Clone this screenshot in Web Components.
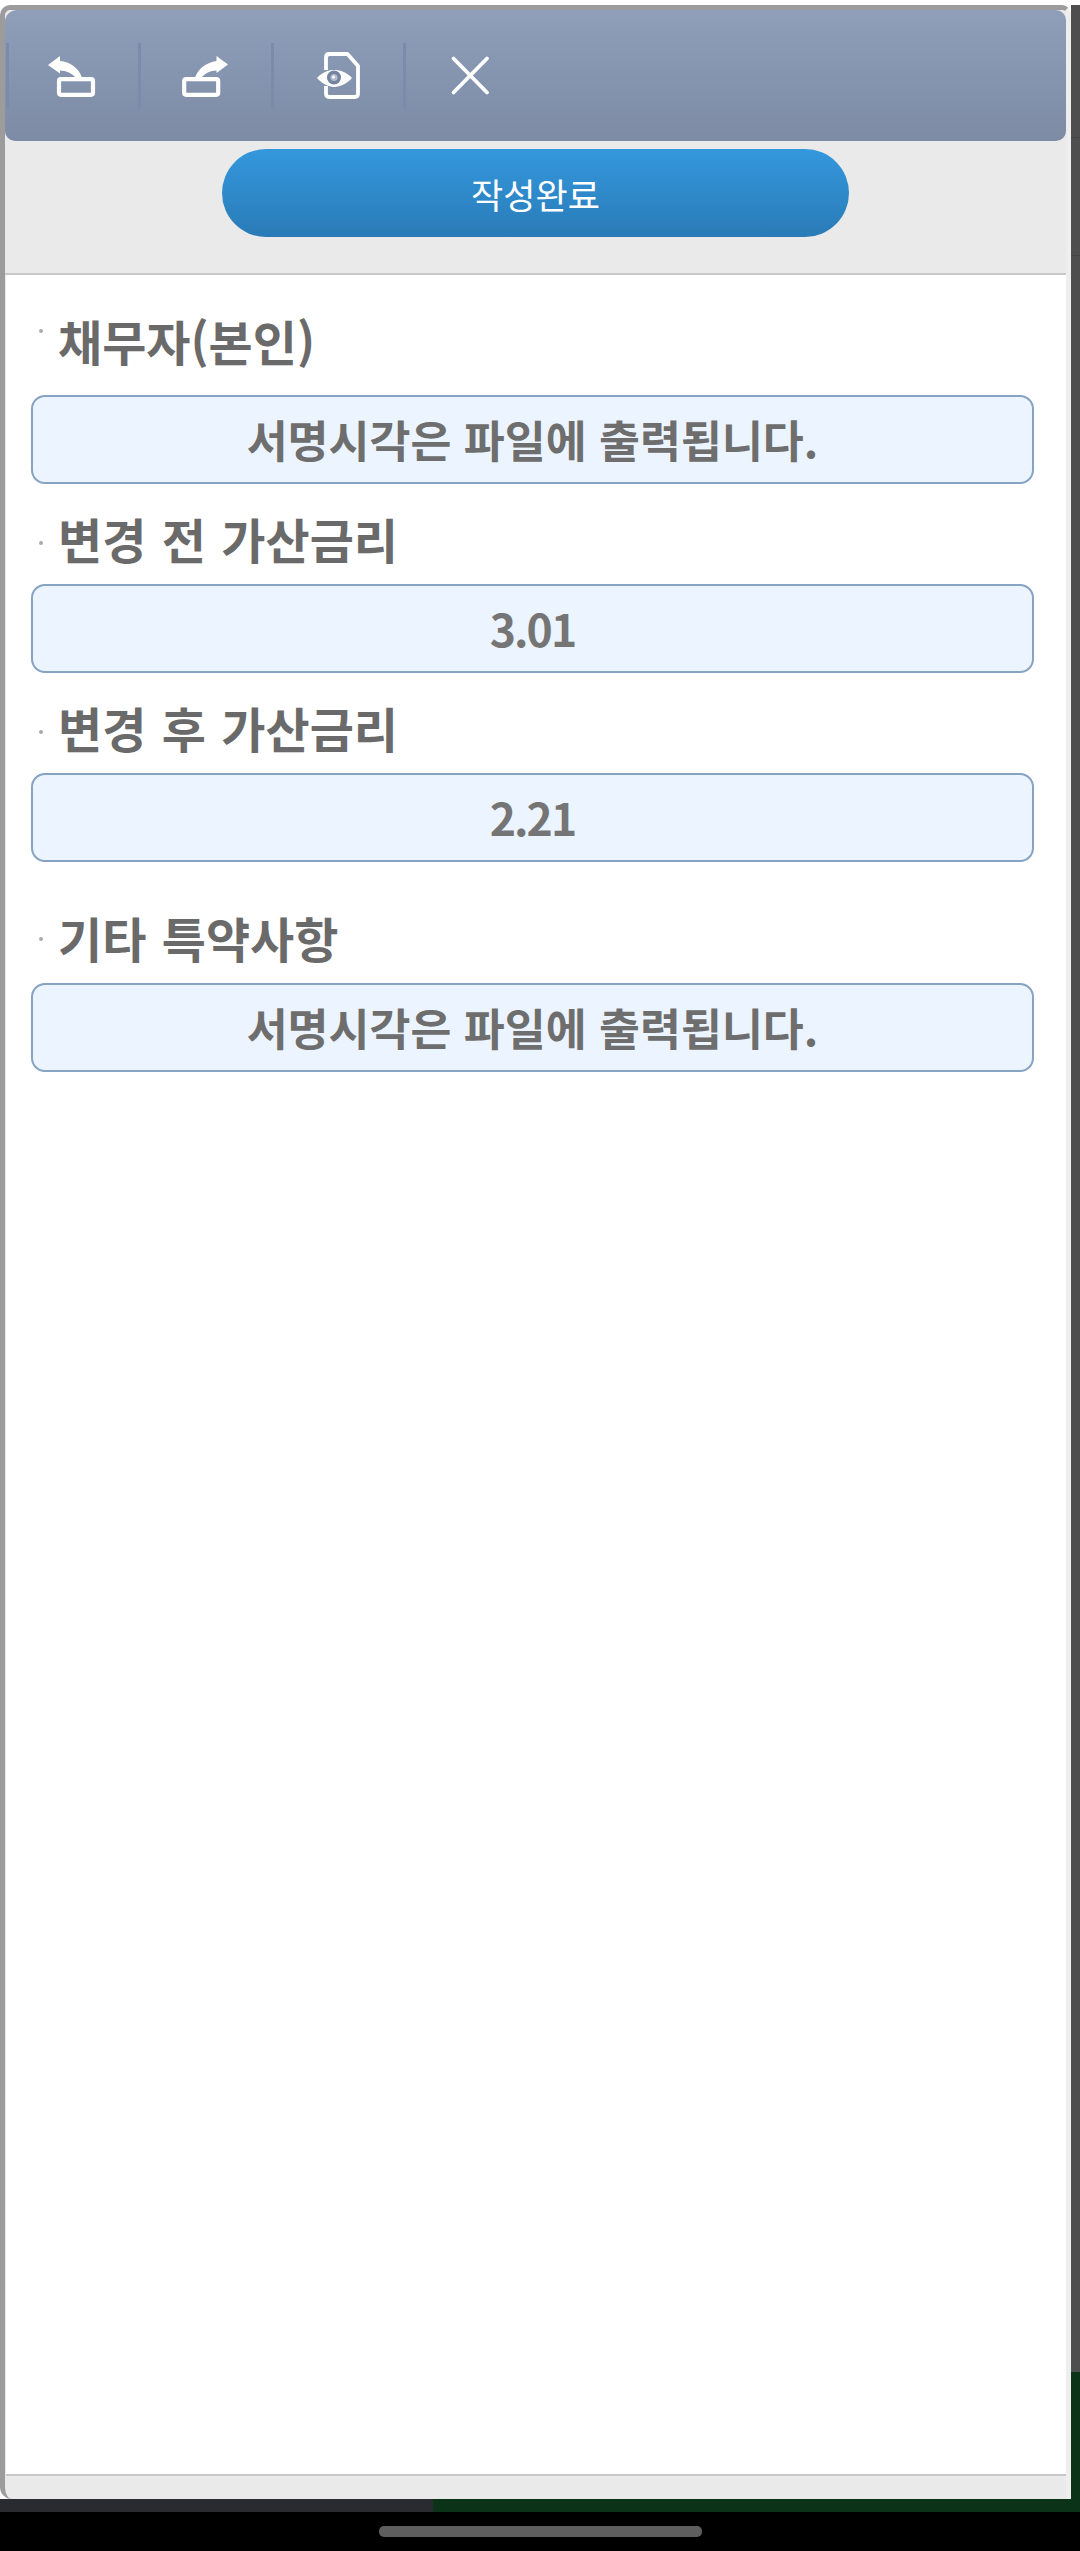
<!DOCTYPE html>
<html lang="ko"><head><meta charset="utf-8"><title>작성</title>
<style>
html,body{margin:0;padding:0;background:#fff}
body{width:1080px;height:2551px;overflow:hidden;font-family:"Noto Sans CJK KR","Noto Sans",sans-serif}
</style></head><body>
<app-screen>
  <tool-bar></tool-bar>
  <action-row label="작성완료"></action-row>
  <form-panel>
    <form-field gap="20" pad="13" dot="21" label="채무자(본인)" value="서명시각은 파일에 출력됩니다."></form-field>
    <form-field gap="0" pad="22" dot="35" label="변경 전 가산금리" value="3.01" num></form-field>
    <form-field gap="0" pad="22" dot="35" label="변경 후 가산금리" value="2.21" num></form-field>
    <form-field gap="21" pad="22" dot="32" label="기타 특약사항" value="서명시각은 파일에 출력됩니다."></form-field>
  </form-panel>
</app-screen>
<script>
function def(name, html){
  customElements.define(name, class extends HTMLElement{
    connectedCallback(){
      if(this.shadowRoot) return;
      const r=this.attachShadow({mode:'open'});
      r.innerHTML=typeof html==='function'?html(this):html;
    }
  });
}
def('app-screen',`<style>
:host{display:flex;flex-direction:column;width:1080px;height:2551px;background:#fff}
.top{height:5px;flex:none}
.mid{display:flex;height:2494px;flex:none}
.dialog{width:1071px;box-sizing:border-box;border-style:solid;border-width:5px 5px 0 5px;border-color:#9c9c9c #eeeeee #eaeaea #9c9c9c;border-radius:10px 9px 0 12px;background:#eaeaea;display:flex;flex-direction:column;overflow:hidden}
.side{flex:1;display:flex;flex-direction:column}
.side i{display:block}
.s1{height:132px;background:#4e4e4e;border-bottom:1px solid #454545}.s2{height:117px;background:#4e4e4e;border-bottom:1px solid #454545}.s3{height:2116px;background:#4e4e4e}.s4{flex:1;background:#0a3318}
.strip{height:13px;flex:none;display:flex}
.strip i{display:block}.a{width:433px;background:#2a2b30}.b{flex:1;background:#0a3318}
.nav{flex:1;background:#000;display:flex;justify-content:center;padding-top:14px;box-sizing:border-box}
.pill{width:323px;height:11px;border-radius:5px;background:#5e5e5e}
</style>
<div class="top"></div>
<div class="mid"><div class="dialog"><slot></slot></div>
<div class="side"><i class="s1"></i><i class="s2"></i><i class="s3"></i><i class="s4"></i></div></div>
<div class="strip"><i class="a"></i><i class="b"></i></div>
<div class="nav"><div class="pill"></div></div>`);
def('tool-bar',`<style>
:host{display:flex;flex:none;align-items:center;height:131px;box-sizing:border-box;padding-left:1px;border-radius:12px 10px 10px 10px;background:linear-gradient(#8f9fb9,#7d8ba5)}
.b{width:132.3px;height:66px;box-sizing:border-box;border-left:3px solid #7a8bab;flex:none;position:relative}
svg{position:absolute;left:-3px;top:-10px;width:132px;height:132px;overflow:visible}
</style>
<div class="b"><svg viewBox="6 33 132 132" fill="none" stroke="#fff" stroke-width="4.2">
<rect x="59" y="79.200" width="34" height="15.600" rx="2"/>
<path d="M48 65 60 56V61C70 62 78.500 67.500 82 77.500H75.500C72 73.500 66.500 70.500 60 70.500V73.500Z" fill="#fff" stroke="none"/></svg></div>
<div class="b"><svg viewBox="138 33 132 132" fill="none" stroke="#fff" stroke-width="4.2">
<rect x="184.200" y="79.200" width="34" height="15.600" rx="2"/>
<path d="M228 64.500 216.500 56V61C206.500 62.500 198.500 68 195 77.500H201.500C205 73.500 210 70.500 216.500 70.500V73Z" fill="#fff" stroke="none"/></svg></div>
<div class="b"><svg viewBox="270 33 132 132" fill="none" stroke="#fff" stroke-width="3.800" stroke-linejoin="round">
<path d="M325 70V57.500Q325 54 328.500 54H346.500L357 66V93.500Q357 97 353.500 97H328.500Q325 97 325 93.500V86"/>
<path d="M316 78C321 72.500 327 70 333 70C339.500 70 346 72.500 351 78C346 83.500 339.500 87 333 87C327 87 321 83.500 316 78Z" fill="#fff" stroke="none"/>
<circle cx="333" cy="77.500" r="7" fill="#74839e" stroke="none"/>
<circle cx="333" cy="77.500" r="3.600" fill="#b4bccc" stroke="none"/>
<circle cx="332.500" cy="77" r="1.500" fill="#fff" stroke="none"/></svg></div>
<div class="b"><svg viewBox="403 33 132 132" fill="none" stroke="#fff" stroke-width="3.800" stroke-linecap="round">
<path d="M453.500 58.500 487 92.500M487 58.500 453.500 92.500"/></svg></div>`);
def('action-row',(h)=>`<style>
:host{display:flex;flex:none;justify-content:center;height:134px;box-sizing:border-box;padding:8px 0 0;border-bottom:2px solid #c8c8c8}
button{all:unset;display:flex;align-items:center;justify-content:center;box-sizing:border-box;width:627px;height:88px;border-radius:44px;background:linear-gradient(#3498dd,#2a7bb7);color:#fff;font:400 35px "Noto Sans CJK KR","Noto Sans",sans-serif}
</style><button>${h.getAttribute('label')}</button>`);
def('form-panel',`<style>
:host{display:flex;flex-direction:column;flex:1;min-height:0;margin:0 0 23px 1px;box-sizing:border-box;background:#fff;padding:0 32px 0 25px;position:relative;border-bottom:2px solid #c8c8c8}
</style><slot></slot>`);
def('form-field',(h)=>`<style>
:host{display:block;flex:none}
.l{display:flex;align-items:flex-start;height:100px;box-sizing:border-box;margin-top:${h.getAttribute('gap')}px;padding-top:${h.getAttribute('pad')}px;color:#6a6a6a;font:700 48px/64px "Noto Sans CJK KR","Noto Sans",sans-serif;word-spacing:2px}
.d{width:4px;height:4px;background:#aaa;border-radius:50%;margin:${h.getAttribute('dot')}px 15px 0 8px;flex:none}
.v{display:flex;align-items:center;justify-content:center;box-sizing:border-box;height:89px;border:2px solid #86a3c3;border-radius:14px;background:#ecf5ff;color:#6e6e6e;font:700 44.500px/1 "Noto Sans CJK KR","Noto Sans",sans-serif}
.num{color:#757575;letter-spacing:-2px}
</style><div class="l"><span class="d"></span><span>${h.getAttribute('label')}</span></div><div class="v${h.hasAttribute('num')?' num':''}">${h.getAttribute('value')}</div>`);
</script>
</body></html>
